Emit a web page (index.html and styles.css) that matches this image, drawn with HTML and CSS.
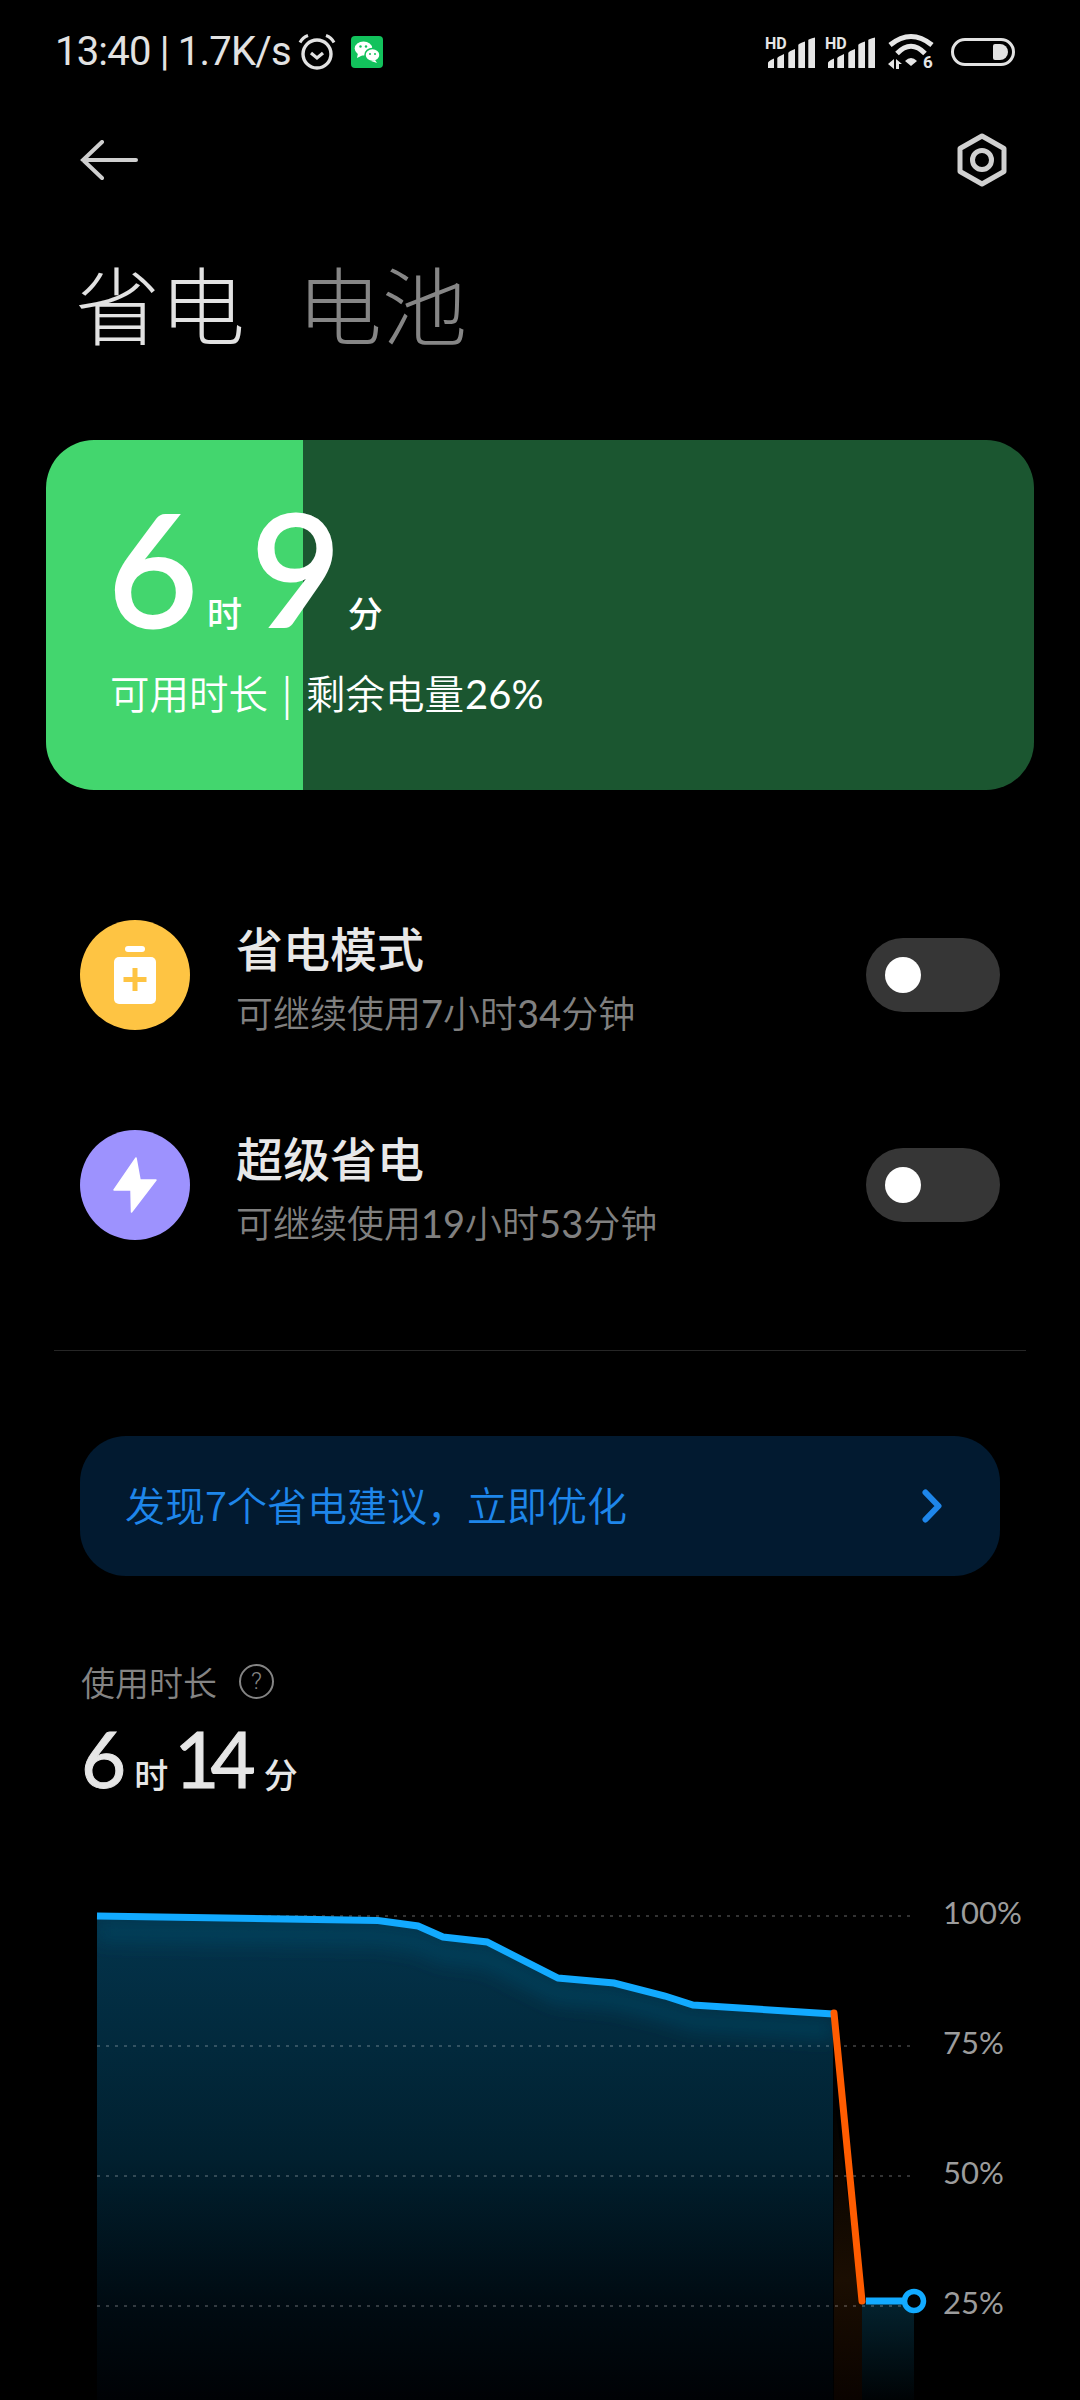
FILE: index.html
```html
<!DOCTYPE html>
<html lang="zh">
<head>
    <meta charset="UTF-8">
    <meta name="viewport" content="width=device-width, initial-scale=1.0">
    <title>省电</title>
    <link rel="stylesheet" href="styles.css">
</head>
<body>
    <div class="statusbar">
        <span class="clock">13:40 | 1.7K/s</span>
        <svg class="alarm" width="38" height="36" viewBox="0 0 38 36">
            <circle cx="19" cy="20" r="14" fill="none" stroke="#e2e2e2" stroke-width="3.400"/>
            <path d="M13 19l6 5 6-5" fill="none" stroke="#e2e2e2" stroke-width="3.200"/>
            <path d="M2 8.500Q4.500 3.500 10 1.500M36 8.500Q33.500 3.500 28 1.500" fill="none" stroke="#e2e2e2" stroke-width="3"/>
        </svg>
        <svg class="wechat" width="32" height="32" viewBox="0 0 32 32">
            <rect width="32" height="32" rx="4" fill="#12c25c"/>
            <ellipse cx="12.500" cy="12.500" rx="8.800" ry="7" fill="#fff"/>
            <path d="M7 17l-1 5 6-3z" fill="#fff"/>
            <ellipse cx="21.500" cy="19" rx="7.500" ry="6.500" fill="#fff" stroke="#12c25c" stroke-width="1.500"/>
            <path d="M24 24l2 3-6-2z" fill="#fff"/>
            <circle cx="9.500" cy="10.500" r="1.200" fill="#12c25c"/>
            <circle cx="15" cy="10.500" r="1.200" fill="#12c25c"/>
            <circle cx="19" cy="18" r="1" fill="#12c25c"/>
            <circle cx="24" cy="18" r="1" fill="#12c25c"/>
        </svg>
        <div class="status-right">
            <svg width="50" height="36" viewBox="0 -2 50 36">
                <text x="0" y="13" class="hd">HD</text>
                <path d="M3 32v-5q0-2 6-4.500V32zM12.300 32V22q0-1 6.700-4V32zM23.300 32V17q0-1.500 6.700-4V32zM33.300 32V9q0-1.500 6.700-3.500V32zM43.300 32V4q0-1 6.700-2.500V32z" fill="#e6e6e6"/>
            </svg>
            <svg width="50" height="36" viewBox="0 -2 50 36">
                <text x="0" y="13" class="hd">HD</text>
                <path d="M3 32v-5q0-2 6-4.500V32zM12.300 32V22q0-1 6.700-4V32zM23.300 32V17q0-1.500 6.700-4V32zM33.300 32V9q0-1.500 6.700-3.500V32zM43.300 32V4q0-1 6.700-2.500V32z" fill="#e6e6e6"/>
            </svg>
            <svg class="wifi" width="46" height="44" viewBox="0 -4 46 44">
                <path d="M2 11Q23-6 44 11M9 19.500Q23 5 37 19.500" fill="none" stroke="#e6e6e6" stroke-width="5"/>
                <path d="M17 27q6-6 12 0l-6 5z" fill="#e6e6e6"/>
                <path d="M0 30l6-5v10zM8 25l6 5h-3v5H8z" fill="#e6e6e6"/>
                <text x="35" y="34" class="hd wifi-six">6</text>
            </svg>
            <div class="battery"><div class="battery-fill"></div></div>
        </div>
    </div>

    <div class="topbar">
        <svg width="58" height="40" viewBox="0 0 58 40">
            <path d="M56 20H3M22 2L3 20l19 18" fill="none" stroke="#cfcfcf" stroke-width="4" stroke-linecap="round"/>
        </svg>
        <svg width="50" height="54" viewBox="0 0 50 54">
            <path d="M25 3L47 15.500v23L25 51 3 38.500v-23z" fill="none" stroke="#d0d0d0" stroke-width="5" stroke-linejoin="round"/>
            <circle cx="25" cy="27" r="9.500" fill="none" stroke="#d0d0d0" stroke-width="5"/>
        </svg>
    </div>

    <div class="tabs">
        <span class="tab tab-active">省电</span>
        <span class="tab">电池</span>
    </div>

    <div class="card">
        <div class="time-big">
            <span class="num">6</span><span class="unit">时</span><span class="num">9</span><span class="unit">分</span>
        </div>
        <div class="card-sub">可用时长 | 剩余电量<span class="pct">26%</span></div>
    </div>

    <div class="modes">
        <div class="mode">
            <div class="mode-icon yellow">
                <svg width="44" height="58" viewBox="0 0 44 58">
                    <rect x="12" width="20" height="6" rx="3" fill="#fff"/>
                    <rect x="1" y="11" width="42" height="47" rx="5" fill="#fff"/>
                    <path d="M22 22v23M10.500 33.500h23" stroke="#fec443" stroke-width="5"/>
                </svg>
            </div>
            <div class="mode-text">
                <div class="mode-title">省电模式</div>
                <div class="mode-sub">可继续使用<span class="digits">7</span>小时<span class="digits">34</span>分钟</div>
            </div>
            <div class="toggle"><div class="knob"></div></div>
        </div>
        <div class="mode">
            <div class="mode-icon purple">
                <svg width="46" height="58" viewBox="0 0 46 58">
                    <path d="M24 2L2 34h17l.5 22L44 24H28z" fill="#fff" stroke="#fff" stroke-width="1.500" stroke-linejoin="round"/>
                </svg>
            </div>
            <div class="mode-text">
                <div class="mode-title">超级省电</div>
                <div class="mode-sub">可继续使用<span class="digits">19</span>小时<span class="digits">53</span>分钟</div>
            </div>
            <div class="toggle"><div class="knob"></div></div>
        </div>
    </div>

    <div class="divider"></div>

    <div class="banner">
        <span class="banner-text">发现7个省电建议，立即优化</span>
        <svg width="20" height="34" viewBox="0 0 20 34">
            <path d="M3.500 3.500L16.500 17 3.500 30.500" fill="none" stroke="#1e86ea" stroke-width="6" stroke-linecap="round" stroke-linejoin="round"/>
        </svg>
    </div>

    <div class="usage">
        <div class="usage-label">
            <span>使用时长</span>
            <span class="help">?</span>
        </div>
        <div class="usage-time">
            <span class="num">6</span><span class="unit">时</span><span class="num num-tight">14</span><span class="unit">分</span>
        </div>
    </div>

    <svg class="chart" width="1080" height="520" viewBox="0 1880 1080 520">
        <defs>
            <linearGradient id="areaBlue" gradientUnits="userSpaceOnUse" x1="0" y1="1916" x2="0" y2="2400">
                <stop offset="0" stop-color="#03344c"/>
                <stop offset="0.5" stop-color="#01202f"/>
                <stop offset="0.8" stop-color="#000b12"/>
                <stop offset="1" stop-color="#000205"/>
            </linearGradient>
            <linearGradient id="areaOrange" gradientUnits="userSpaceOnUse" x1="0" y1="2100" x2="0" y2="2400">
                <stop offset="0" stop-color="#000"/>
                <stop offset="0.6" stop-color="#1b0e02"/>
                <stop offset="1" stop-color="#0a0300"/>
            </linearGradient>
            <linearGradient id="areaEnd" gradientUnits="userSpaceOnUse" x1="0" y1="2301" x2="0" y2="2400">
                <stop offset="0" stop-color="#04232f"/>
                <stop offset="1" stop-color="#000305"/>
            </linearGradient>
            <clipPath id="clipArea">
                <path d="M97 1916L378 1920.500 418 1926 443 1937 487 1942 558 1978 614 1983 665 1996 693 2005 833 2014V2400H97z"/>
            </clipPath>
            <filter id="glow" x="-5%" y="-100%" width="110%" height="300%">
                <feGaussianBlur stdDeviation="9"/>
            </filter>
        </defs>

        <path d="M97 1916L378 1920.500 418 1926 443 1937 487 1942 558 1978 614 1983 665 1996 693 2005 833 2014V2400H97z" fill="url(#areaBlue)"/>
        <g clip-path="url(#clipArea)">
            <path d="M97 1932L378 1936 418 1942 443 1953 487 1958 558 1994 614 1999 665 2012 693 2021 833 2030" fill="none" stroke="#0a4a6a" stroke-width="18" stroke-opacity="0.55" filter="url(#glow)"/>
        </g>
        <path d="M834 2100L862 2301V2400H834z" fill="url(#areaOrange)"/>
        <rect x="862" y="2301" width="52" height="99" fill="url(#areaEnd)"/>

        <g class="grid">
            <path d="M97 1916H914M97 2046H914M97 2176H914M97 2306H914"/>
        </g>

        <path d="M97 1916L378 1920.500 418 1926 443 1937 487 1942 558 1978 614 1983 665 1996 693 2005 833 2014" fill="none" stroke="#12aaff" stroke-width="7"/>
        <path d="M834 2013L862 2301" fill="none" stroke="#ff5c00" stroke-width="7" stroke-linecap="round"/>
        <path d="M866 2301H906" fill="none" stroke="#12aaff" stroke-width="7"/>
        <circle cx="914" cy="2301" r="9.500" fill="#000" stroke="#12aaff" stroke-width="5.500"/>

        <text x="943" y="1924" class="axis">100%</text>
        <text x="943" y="2054" class="axis">75%</text>
        <text x="943" y="2184" class="axis">50%</text>
        <text x="943" y="2314" class="axis">25%</text>
    </svg>
</body>
</html>
```
FILE: styles.css
```css
html, body {
    margin: 0;
    padding: 0;
    background: #000;
}
body {
    width: 1080px;
    height: 2400px;
    overflow: hidden;
    font-family: "Noto Sans CJK SC", sans-serif;
    color: #fff;
}
.num {
    font-family: Lato, "Noto Sans", sans-serif;
}
.statusbar {
    display: flex;
    align-items: center;
    height: 36px;
    padding: 34px 65px 0 55px;
}
.clock {
    font-family: Roboto, sans-serif;
    font-size: 40px;
    letter-spacing: -0.8px;
    color: #e2e2e2;
    line-height: 36px;
}
.alarm {
    margin-left: 7px;
}
.wechat {
    margin-left: 15px;
}
.status-right {
    display: flex;
    align-items: center;
    gap: 10px;
    margin-left: auto;
}
.hd {
    font-family: Roboto, sans-serif;
    font-size: 16px;
    font-weight: 700;
    fill: #e6e6e6;
}
.wifi-six {
    font-size: 17px;
}
.wifi {
    margin: 0 7px 0 3px;
}
.battery {
    display: flex;
    justify-content: flex-end;
    box-sizing: border-box;
    width: 64px;
    height: 28px;
    padding: 3px 4px;
    border: 3px solid #e2e2e2;
    border-radius: 14px;
}
.battery-fill {
    width: 15px;
    background: #e2e2e2;
    border-radius: 2px 8px 8px 2px;
}
.topbar {
    display: flex;
    justify-content: space-between;
    align-items: center;
    height: 54px;
    padding: 63px 73px 0 80px;
}
.tabs {
    display: flex;
    gap: 52px;
    padding: 54px 0 0 75px;
    height: 122px;
}
.tab {
    font-size: 85px;
    font-weight: 300;
    line-height: 122px;
    color: #868686;
}
.tab-active {
    color: #e2e2e2;
}
.card {
    box-sizing: border-box;
    width: 988px;
    height: 350px;
    margin: 77px 0 0 46px;
    padding: 52px 0 0 62px;
    background: linear-gradient(90deg, #43d66e 26%, #1b5630 26%);
    border-radius: 48px;
}
.time-big {
    display: flex;
    align-items: baseline;
    height: 150px;
    line-height: 150px;
}
.time-big .num {
    font-size: 155px;
    -webkit-text-stroke: 3px #fff;
}
.time-big .unit {
    font-size: 35px;
    font-weight: 500;
    margin: 0 9px 0 9px;
}
.time-big .unit:last-child {
    margin-left: 7px;
}
.card-sub {
    margin: 22px 0 0 2px;
    font-size: 39.500px;
    font-weight: 350;
    line-height: 56px;
    word-spacing: 5px;
}
.pct {
    font-family: Lato, sans-serif;
    font-size: 40px;
    font-weight: 400;
    margin-left: 1px;
}
.modes {
    display: flex;
    flex-direction: column;
    gap: 100px;
    margin-top: 130px;
    padding: 0 80px;
}
.mode {
    display: flex;
    align-items: center;
    height: 110px;
}
.mode-icon {
    display: flex;
    justify-content: center;
    align-items: center;
    width: 110px;
    height: 110px;
    border-radius: 50%;
}
.yellow {
    background: #fec443;
}
.purple {
    background: #9d92fe;
}
.mode-text {
    align-self: flex-start;
    margin: -6px 0 0 46px;
}
.mode-title {
    font-size: 47px;
    font-weight: 500;
    line-height: 66px;
    color: #e8e8e8;
}
.mode-sub {
    font-size: 37px;
    font-weight: 350;
    line-height: 64px;
    color: #808080;
}
.digits {
    font-family: Lato, sans-serif;
    font-size: 38px;
    font-weight: 400;
}
.toggle {
    box-sizing: border-box;
    width: 134px;
    height: 74px;
    margin-left: auto;
    padding: 19px;
    background: #363636;
    border-radius: 37px;
}
.knob {
    width: 36px;
    height: 36px;
    background: #fff;
    border-radius: 50%;
}
.divider {
    height: 1px;
    margin: 110px 54px 0;
    background: #262626;
}
.banner {
    display: flex;
    justify-content: space-between;
    align-items: center;
    height: 140px;
    margin: 85px 80px 0;
    padding: 0 58px 0 45px;
    background: #021a30;
    border-radius: 46px;
    font-size: 40px;
    font-weight: 350;
    color: #1e86ea;
}
.banner-text {
    padding-bottom: 4px;
}
.usage {
    margin: 81px 0 0 81px;
}
.usage-label {
    display: flex;
    align-items: center;
    gap: 22px;
    height: 48px;
    font-size: 34px;
    font-weight: 350;
    color: #848484;
}
.help {
    display: flex;
    justify-content: center;
    align-items: center;
    box-sizing: border-box;
    width: 35px;
    height: 35px;
    border: 2px solid #848484;
    border-radius: 50%;
    font-family: Roboto, sans-serif;
    font-size: 24px;
}
.usage-time {
    display: flex;
    align-items: baseline;
    height: 90px;
    margin-top: 8px;
    color: #e6e6e6;
}
.usage-time .num {
    font-size: 78px;
    line-height: 90px;
    -webkit-text-stroke: 1px #e6e6e6;
}
.usage-time .num-tight {
    letter-spacing: -9px;
}
.usage-time .unit {
    font-size: 34px;
    font-weight: 500;
    margin: 0 6px 0 8px;
}
.usage-time .unit:last-child {
    margin-left: 17px;
}
.chart {
    display: block;
    margin-top: 77px;
}
.grid path {
    fill: none;
    stroke: #ffffff;
    stroke-opacity: 0.2;
    stroke-width: 2;
    stroke-dasharray: 3 6;
}
.axis {
    font-family: Lato, Roboto, sans-serif;
    font-size: 31px;
    font-weight: 400;
    fill: #9c9c9c;
}
```
